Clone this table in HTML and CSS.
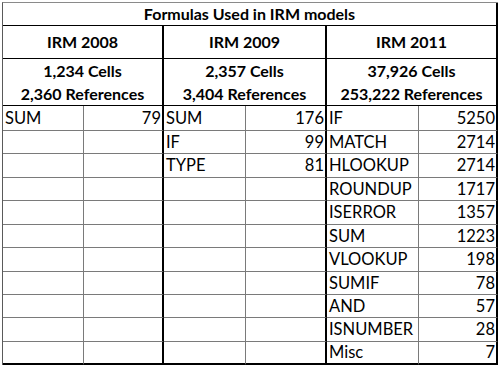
FILE: index.html
```html
<!DOCTYPE html>
<html>
<head>
<meta charset="utf-8">
<link rel="stylesheet" href="styles.css">
</head>
<body>
<div class="sheet">
  <div class="c title span6">Formulas Used in IRM models</div>

  <div class="c head span2 grp">IRM 2008</div>
  <div class="c head span2 grp">IRM 2009</div>
  <div class="c head span2 grp">IRM 2011</div>

  <div class="c stats span2 grp"><span>1,234 Cells</span><span>2,360 References</span></div>
  <div class="c stats span2 grp"><span>2,357 Cells</span><span>3,404 References</span></div>
  <div class="c stats span2 grp"><span>37,926 Cells</span><span>253,222 References</span></div>

  <div class="c">SUM</div><div class="c num grp">79</div><div class="c">SUM</div><div class="c num grp">176</div><div class="c">IF</div><div class="c num grp">5250</div>
  <div class="c"></div><div class="c num grp"></div><div class="c">IF</div><div class="c num grp">99</div><div class="c">MATCH</div><div class="c num grp">2714</div>
  <div class="c"></div><div class="c num grp"></div><div class="c">TYPE</div><div class="c num grp">81</div><div class="c">HLOOKUP</div><div class="c num grp">2714</div>
  <div class="c"></div><div class="c num grp"></div><div class="c"></div><div class="c num grp"></div><div class="c">ROUNDUP</div><div class="c num grp">1717</div>
  <div class="c"></div><div class="c num grp"></div><div class="c"></div><div class="c num grp"></div><div class="c">ISERROR</div><div class="c num grp">1357</div>
  <div class="c"></div><div class="c num grp"></div><div class="c"></div><div class="c num grp"></div><div class="c">SUM</div><div class="c num grp">1223</div>
  <div class="c"></div><div class="c num grp"></div><div class="c"></div><div class="c num grp"></div><div class="c">VLOOKUP</div><div class="c num grp">198</div>
  <div class="c"></div><div class="c num grp"></div><div class="c"></div><div class="c num grp"></div><div class="c">SUMIF</div><div class="c num grp">78</div>
  <div class="c"></div><div class="c num grp"></div><div class="c"></div><div class="c num grp"></div><div class="c">AND</div><div class="c num grp">57</div>
  <div class="c"></div><div class="c num grp"></div><div class="c"></div><div class="c num grp"></div><div class="c">ISNUMBER</div><div class="c num grp">28</div>
  <div class="c last"></div><div class="c num grp last"></div><div class="c last"></div><div class="c num grp last"></div><div class="c last">Misc</div><div class="c num grp last">7</div>
</div>
</body>
</html>
```

FILE: styles.css
```css
* { box-sizing: border-box; }
html, body { margin: 0; padding: 0; background: #fff; }
body {
  font-family: Lato, "Open Sans", sans-serif;
  font-size: 16.5px;
  color: #000;
}
.sheet {
  margin: 2px 0 0 2px;
  width: 496px;
  display: grid;
  grid-template-columns: 81px 80px 82px 81px 92px 79px;
  grid-template-rows: 23px 33px 47px 25px 23px 24px 23px 24px 23px 24px 23px 23px 24px 23px;
  border-top: 1px solid #8a8a8a;
  border-left: 1px solid #5a5a5a;
}
.c {
  border-right: 1px solid #7a7a7a;
  border-bottom: 1px solid #7a7a7a;
  padding: 0 2px;
  display: flex;
  align-items: center;
  white-space: nowrap;
  overflow: hidden;
  line-height: 1;
}
.num { justify-content: flex-end; padding-right: 1px; }
.grp { border-right: 2px solid #000; }
.span6 { grid-column: span 6; }
.span2 { grid-column: span 2; }
.title, .head, .stats {
  font-weight: bold;
  font-size: 16px;
  justify-content: center;
  border-bottom: 1px solid #000;
}
.title { border-right: 2px solid #000; }
.stats {
  flex-direction: column;
  gap: 7px;
}
.last { border-bottom: 2px solid #000; }
```
